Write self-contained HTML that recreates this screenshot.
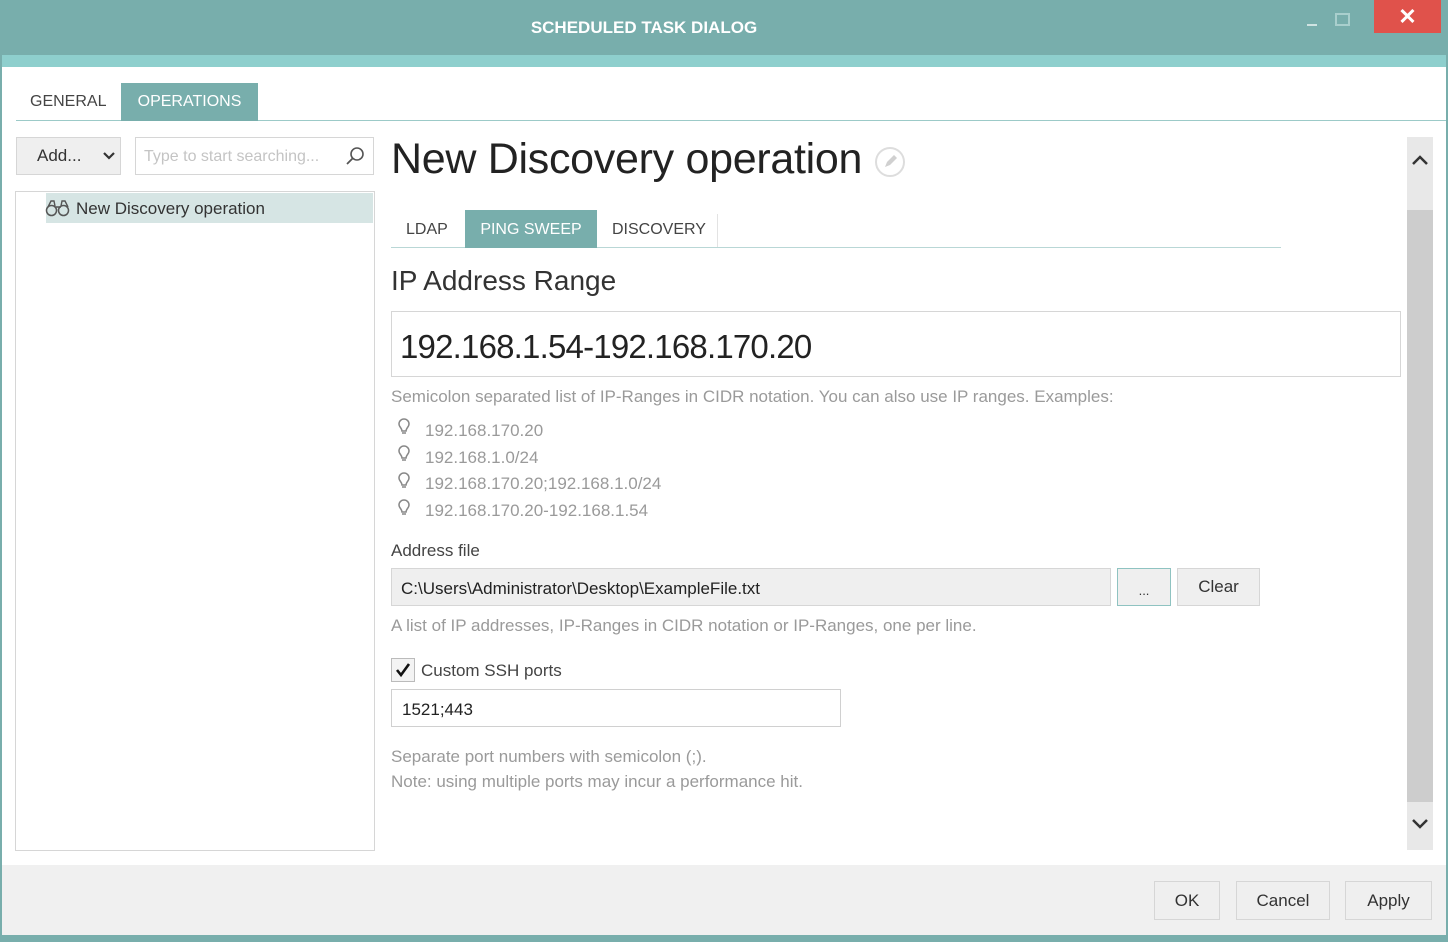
<!DOCTYPE html>
<html><head><meta charset="utf-8"><style>
*{box-sizing:border-box;margin:0;padding:0}
body{width:1448px;height:942px;position:relative;overflow:hidden;background:#fff;font-family:"Liberation Sans",sans-serif;color:#333}
.a{position:absolute}
.btn{position:absolute;background:#efefef;border:1px solid #d6d6d6;font-size:17px;color:#333;display:flex;align-items:center;justify-content:center}
.gray{color:#9a9a9a}
</style></head><body>
<div class="a" style="left:0;top:0;width:1448px;height:55px;background:#78aeac"></div>
<div class="a" style="left:0;top:55px;width:1448px;height:12px;background:#8ecfcd"></div>
<div class="a" style="left:0;top:0;width:1448px;height:55px;color:#fff;font-weight:bold;font-size:17px;text-align:center;line-height:56px;padding-right:160px">SCHEDULED TASK DIALOG</div>
<div class="a" style="left:1307px;top:24px;width:10px;height:2px;background:#cfe3e2"></div>
<div class="a" style="left:1335px;top:13px;width:15px;height:13px;border:2px solid #a9cfcd"></div>
<div class="a" style="left:1374px;top:0;width:67px;height:33px;background:#e0524b;color:#fff;font-size:22px;font-weight:bold;text-align:center;line-height:34px">✕</div>
<div class="a" style="left:0;top:55px;width:2px;height:887px;background:#78aeac"></div>
<div class="a" style="left:1446px;top:55px;width:2px;height:887px;background:#78aeac"></div>
<div class="a" style="left:16px;top:120px;width:1430px;height:1px;background:#9ccac8"></div>
<div class="a" style="left:30px;top:93px;font-size:16px;color:#444">GENERAL</div>
<div class="a" style="left:121px;top:83px;width:137px;height:38px;background:#78aeac;color:#fff;font-size:16px;line-height:38px;text-align:center">OPERATIONS</div>
<div class="btn" style="left:16px;top:137px;width:105px;height:38px;justify-content:flex-start;padding-left:20px">Add...</div>
<svg class="a" style="left:102px;top:151px" width="14" height="10"><path d="M2 2l5 5 5-5" stroke="#333" stroke-width="2.2" fill="none"/></svg>
<div class="a" style="left:135px;top:137px;width:239px;height:38px;border:1px solid #d6d6d6;font-size:16px;color:#c4c4c4;padding:10px 8px">Type to start searching...</div>
<svg class="a" style="left:344px;top:145px" width="22" height="22"><circle cx="13" cy="9" r="6" stroke="#555" stroke-width="1.6" fill="none"/><path d="M9 13l-6 6" stroke="#555" stroke-width="1.8"/></svg>
<div class="a" style="left:15px;top:191px;width:360px;height:660px;border:1px solid #d6d6d6"></div>
<div class="a" style="left:46px;top:193px;width:327px;height:30px;background:#d6e5e4"></div>
<svg class="a" style="left:45px;top:198px" width="26" height="20"><circle cx="6.5" cy="12.5" r="5" stroke="#555" stroke-width="1.5" fill="none"/><circle cx="18.5" cy="12.5" r="5" stroke="#555" stroke-width="1.5" fill="none"/><path d="M3 9l3-6h3l1 5M23 9l-3-6h-3l-1 5M10 9h6" stroke="#555" stroke-width="1.4" fill="none"/></svg>
<div class="a" style="left:76px;top:199px;font-size:17px;color:#333">New Discovery operation</div>
<div class="a" style="left:391px;top:135px;font-size:43px;color:#222;letter-spacing:-0.3px">New Discovery operation</div>
<svg class="a" style="left:874px;top:146px" width="32" height="32"><circle cx="16" cy="16" r="14" stroke="#ddd" stroke-width="2" fill="none"/><path d="M11 21l2-5 7-7 3 3-7 7z" fill="#d0d0d0"/></svg>
<div class="a" style="left:391px;top:247px;width:890px;height:1px;background:#b9d7d6"></div>
<div class="a" style="left:406px;top:221px;font-size:16px;color:#444">LDAP</div>
<div class="a" style="left:465px;top:210px;width:132px;height:38px;background:#78aeac;color:#fff;font-size:16px;line-height:40px;text-align:center">PING SWEEP</div>
<div class="a" style="left:612px;top:221px;font-size:16px;color:#444">DISCOVERY</div>
<div class="a" style="left:717px;top:214px;width:1px;height:33px;background:#e3e3e3"></div>
<div class="a" style="left:391px;top:265px;font-size:28px;color:#333">IP Address Range</div>
<div class="a" style="left:391px;top:311px;width:1010px;height:66px;border:1px solid #d6d6d6"></div>
<div class="a" style="left:400px;top:328px;font-size:33px;color:#222;letter-spacing:-0.8px">192.168.1.54-192.168.170.20</div>
<div class="a gray" style="left:391px;top:387px;font-size:17px">Semicolon separated list of IP-Ranges in CIDR notation. You can also use IP ranges. Examples:</div>
<div class="a gray" style="left:425px;top:418px;font-size:17px;line-height:26.7px">192.168.170.20<br>192.168.1.0/24<br>192.168.170.20;192.168.1.0/24<br>192.168.170.20-192.168.1.54</div>
<svg class="a" style="left:395px;top:416px" width="18" height="110"><g stroke="#888" stroke-width="1.5" fill="none"><path d="M4 8a5 5 0 1 1 10 0c0 3-3 4-3 7h-4c0-3-3-4-3-7zM7 17h4"/></g><g stroke="#888" stroke-width="1.5" fill="none" transform="translate(0,27)"><path d="M4 8a5 5 0 1 1 10 0c0 3-3 4-3 7h-4c0-3-3-4-3-7zM7 17h4"/></g><g stroke="#888" stroke-width="1.5" fill="none" transform="translate(0,54)"><path d="M4 8a5 5 0 1 1 10 0c0 3-3 4-3 7h-4c0-3-3-4-3-7zM7 17h4"/></g><g stroke="#888" stroke-width="1.5" fill="none" transform="translate(0,81)"><path d="M4 8a5 5 0 1 1 10 0c0 3-3 4-3 7h-4c0-3-3-4-3-7zM7 17h4"/></g></svg>
<div class="a" style="left:391px;top:541px;font-size:17px;color:#444">Address file</div>
<div class="a" style="left:391px;top:568px;width:720px;height:38px;background:#efefef;border:1px solid #d6d6d6;font-size:17px;color:#222;padding:10px 9px">C:\Users\Administrator\Desktop\ExampleFile.txt</div>
<div class="btn" style="left:1117px;top:568px;width:54px;height:38px;border-color:#8fc3c1;font-size:13px;padding-top:6px">...</div>
<div class="btn" style="left:1177px;top:568px;width:83px;height:38px">Clear</div>
<div class="a gray" style="left:391px;top:616px;font-size:17px">A list of IP addresses, IP-Ranges in CIDR notation or IP-Ranges, one per line.</div>
<div class="a" style="left:391px;top:658px;width:24px;height:24px;border:1px solid #bbb;background:#f3f3f3"></div>
<svg class="a" style="left:394px;top:661px" width="18" height="18"><path d="M3 9l4 5 8-11" stroke="#111" stroke-width="2.6" fill="none"/></svg>
<div class="a" style="left:421px;top:661px;font-size:17px;color:#444">Custom SSH ports</div>
<div class="a" style="left:391px;top:689px;width:450px;height:38px;border:1px solid #d0d0d0;font-size:17px;color:#222;padding:10px 10px">1521;443</div>
<div class="a gray" style="left:391px;top:745px;font-size:17px;line-height:24.5px">Separate port numbers with semicolon (;).<br>Note: using multiple ports may incur a performance hit.</div>
<div class="a" style="left:1407px;top:137px;width:26px;height:713px;background:#e8e8e8"></div>
<div class="a" style="left:1407px;top:210px;width:26px;height:592px;background:#cdcdcd"></div>
<svg class="a" style="left:1410px;top:152px" width="20" height="16"><path d="M3 12l7-7 7 7" stroke="#333" stroke-width="2.5" fill="none"/></svg>
<svg class="a" style="left:1410px;top:816px" width="20" height="16"><path d="M3 4l7 7 7-7" stroke="#333" stroke-width="2.5" fill="none"/></svg>
<div class="a" style="left:2px;top:865px;width:1444px;height:70px;background:#f0f0f0"></div>
<div class="a" style="left:0;top:935px;width:1448px;height:7px;background:#78aeac"></div>
<div class="btn" style="left:1154px;top:881px;width:66px;height:39px">OK</div>
<div class="btn" style="left:1236px;top:881px;width:94px;height:39px">Cancel</div>
<div class="btn" style="left:1345px;top:881px;width:87px;height:39px">Apply</div>
</body></html>
